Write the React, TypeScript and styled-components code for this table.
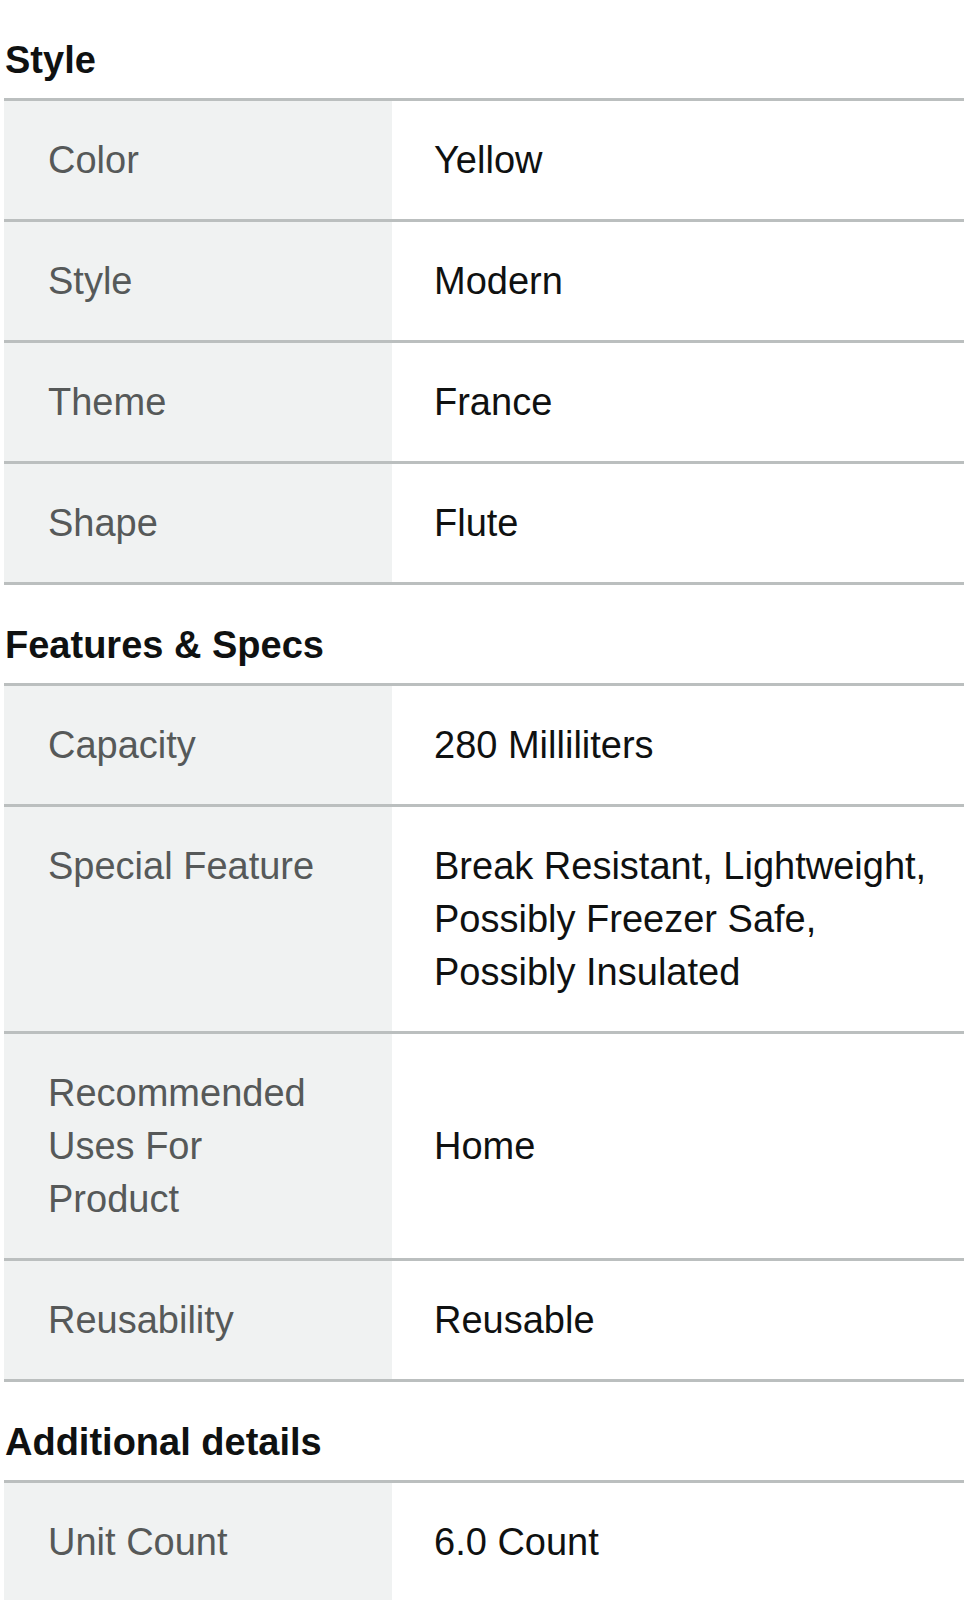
import React from "react";
import styled, { createGlobalStyle } from "styled-components";

type Spec = { label: string; value: string[] };
type SpecGroup = { title: string; rows: Spec[] };

const groups: SpecGroup[] = [
  {
    title: "Style",
    rows: [
      { label: "Color", value: ["Yellow"] },
      { label: "Style", value: ["Modern"] },
      { label: "Theme", value: ["France"] },
      { label: "Shape", value: ["Flute"] },
    ],
  },
  {
    title: "Features & Specs",
    rows: [
      { label: "Capacity", value: ["280 Milliliters"] },
      {
        label: "Special Feature",
        value: [
          "Break Resistant, Lightweight,",
          "Possibly Freezer Safe,",
          "Possibly Insulated",
        ],
      },
      { label: "Recommended Uses For Product", value: ["Home"] },
      { label: "Reusability", value: ["Reusable"] },
    ],
  },
  {
    title: "Additional details",
    rows: [{ label: "Unit Count", value: ["6.0 Count"] }],
  },
];

const GlobalStyle = createGlobalStyle`
  html, body {
    margin: 0;
    padding: 0;
    background: #ffffff;
  }
  body {
    font-family: "Liberation Sans", Arial, sans-serif;
    color: #0f1111;
  }
`;

const Page = styled.div`
  padding-left: 4px;
`;

const Section = styled.section`
  display: flex;
  flex-direction: column;
`;

const Heading = styled.h2`
  margin: 0 0 11px;
  padding: 34px 0 0 1px;
  font-size: 38px;
  line-height: 53px;
  font-weight: 700;
  color: #0f1111;
`;

const Table = styled.div`
  border-top: 3px solid #bbbfbf;
`;

const Row = styled.div`
  display: grid;
  grid-template-columns: 388px 1fr;
  border-bottom: 3px solid #bbbfbf;
`;

const Label = styled.div`
  background: #f0f2f2;
  padding: 33px 70px 32px 44px;
  font-size: 38px;
  line-height: 53px;
  color: #565959;
`;

const Value = styled.div`
  display: flex;
  flex-direction: column;
  justify-content: center;
  padding: 33px 0 32px 42px;
  font-size: 38px;
  line-height: 53px;
  color: #0f1111;
  white-space: nowrap;
`;

const Line = styled.span`
  display: block;
`;

const App = () => {
  return (
    <Page>
      <GlobalStyle />
      {groups.map((group) => (
        <Section key={group.title}>
          <Heading>{group.title}</Heading>
          <Table>
            {group.rows.map((row) => (
              <Row key={row.label}>
                <Label>{row.label}</Label>
                <Value>
                  {row.value.map((v) => (
                    <Line key={v}>{v}</Line>
                  ))}
                </Value>
              </Row>
            ))}
          </Table>
        </Section>
      ))}
    </Page>
  );
};

export default App;
